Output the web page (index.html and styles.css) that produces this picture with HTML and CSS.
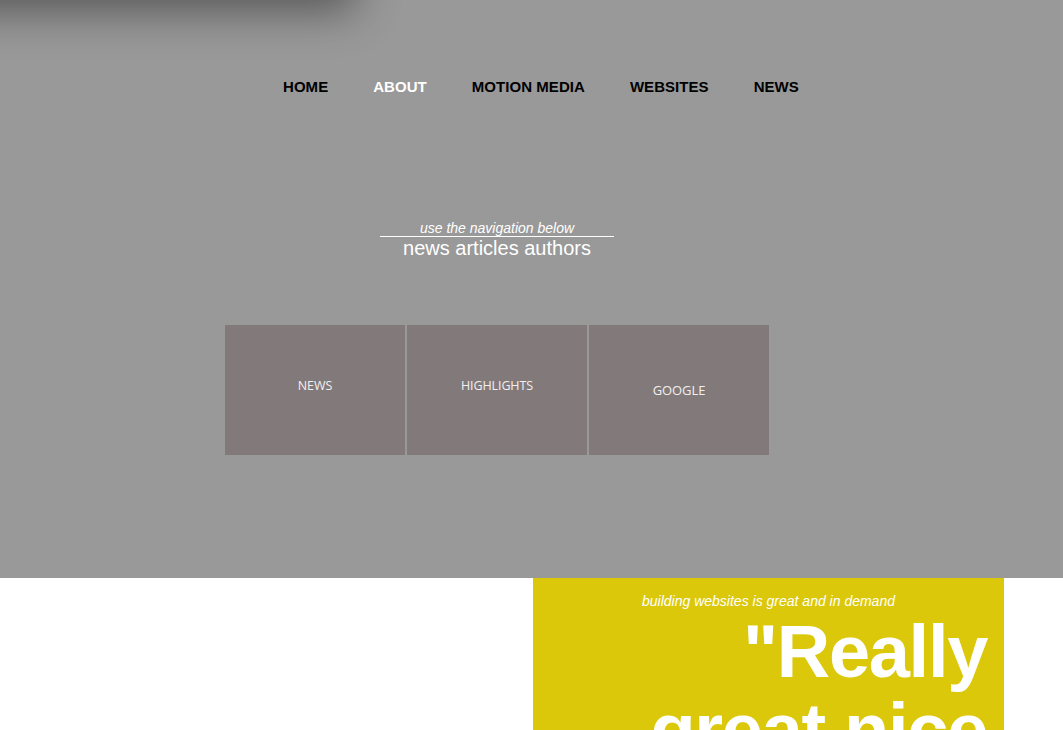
FILE: index.html
```html
<!DOCTYPE html>
<html lang="en">
<head>
<meta charset="utf-8">
<title>News articles authors</title>
<link rel="stylesheet" href="styles.css">
</head>
<body>
<header class="hero">
  <div class="hero-shadow"></div>
  <nav class="nav">
    <a class="nav-link" href="#">HOME</a>
    <a class="nav-link nav-link--active" href="#">ABOUT</a>
    <a class="nav-link" href="#">MOTION MEDIA</a>
    <a class="nav-link" href="#">WEBSITES</a>
    <a class="nav-link" href="#">NEWS</a>
  </nav>
  <div class="title-block">
    <p class="title-sub">use the navigation below</p>
    <h1 class="title-main">news articles authors</h1>
  </div>
  <div class="tiles">
    <a class="tile" href="#"><span class="tile-label">NEWS</span></a>
    <a class="tile" href="#"><span class="tile-label">HIGHLIGHTS</span></a>
    <a class="tile" href="#"><span class="tile-label tile-label--low">GOOGLE</span></a>
  </div>
</header>
<section class="lower">
  <div class="quote-box">
    <p class="quote-sub">building websites is great and in demand</p>
    <p class="quote-big">"Really great nice work"</p>
  </div>
</section>
</body>
</html>
```

FILE: styles.css
```css
* { box-sizing: border-box; }
html, body { margin: 0; padding: 0; }
body {
  font-family: "Liberation Sans", Arial, sans-serif;
  background: #ffffff;
  overflow-x: hidden;
}
.hero {
  position: relative;
  height: 578px;
  background: #999999;
  padding-top: 78px;
  overflow: hidden;
}
.hero-shadow {
  position: absolute;
  top: -70px;
  left: -60px;
  width: 405px;
  height: 70px;
  box-shadow: 0 0 45px 10px rgba(0, 0, 0, 0.45);
}
.nav {
  display: flex;
  gap: 45px;
  padding-left: 283px;
}
.nav-link {
  font-size: 15px;
  line-height: 18px;
  font-weight: bold;
  color: #000000;
  text-decoration: none;
  letter-spacing: 0.05px;
}
.nav-link--active { color: #ffffff; }
.title-block {
  width: 234px;
  margin: 124px 0 0 380px;
  text-align: center;
  color: #ffffff;
}
.title-sub {
  margin: 0;
  font-size: 14px;
  line-height: 16px;
  font-style: italic;
  border-bottom: 1px solid #ffffff;
}
.title-main {
  margin: 0;
  font-size: 20px;
  line-height: 22px;
  font-weight: normal;
}
.tiles {
  display: grid;
  grid-template-columns: repeat(3, 180px);
  gap: 2px;
  margin: 66px 0 0 225px;
}
.tile {
  height: 130px;
  background: #827a7a;
  text-align: center;
  text-decoration: none;
  padding-top: 53px;
}
.tile-label {
  display: block;
  font-family: "Open Sans", "Liberation Sans", sans-serif;
  font-size: 12.5px;
  line-height: 16px;
  color: #f2efef;
  letter-spacing: -0.1px;
}
.tile-label--low {
  padding-top: 4px;
  font-size: 13px;
}
.lower {
  padding-left: 533px;
}
.quote-box {
  width: 471px;
  background: #dcc80b;
  padding: 15px 17px 40px 40px;
  color: #ffffff;
}
.quote-sub {
  margin: 0 0 0 -23px;
  font-size: 14px;
  line-height: 16px;
  font-style: italic;
  text-align: center;
}
.quote-big {
  margin: 4px 0 0 0;
  font-size: 74px;
  line-height: 78px;
  font-weight: bold;
  letter-spacing: -1.3px;
  text-align: right;
}
```
